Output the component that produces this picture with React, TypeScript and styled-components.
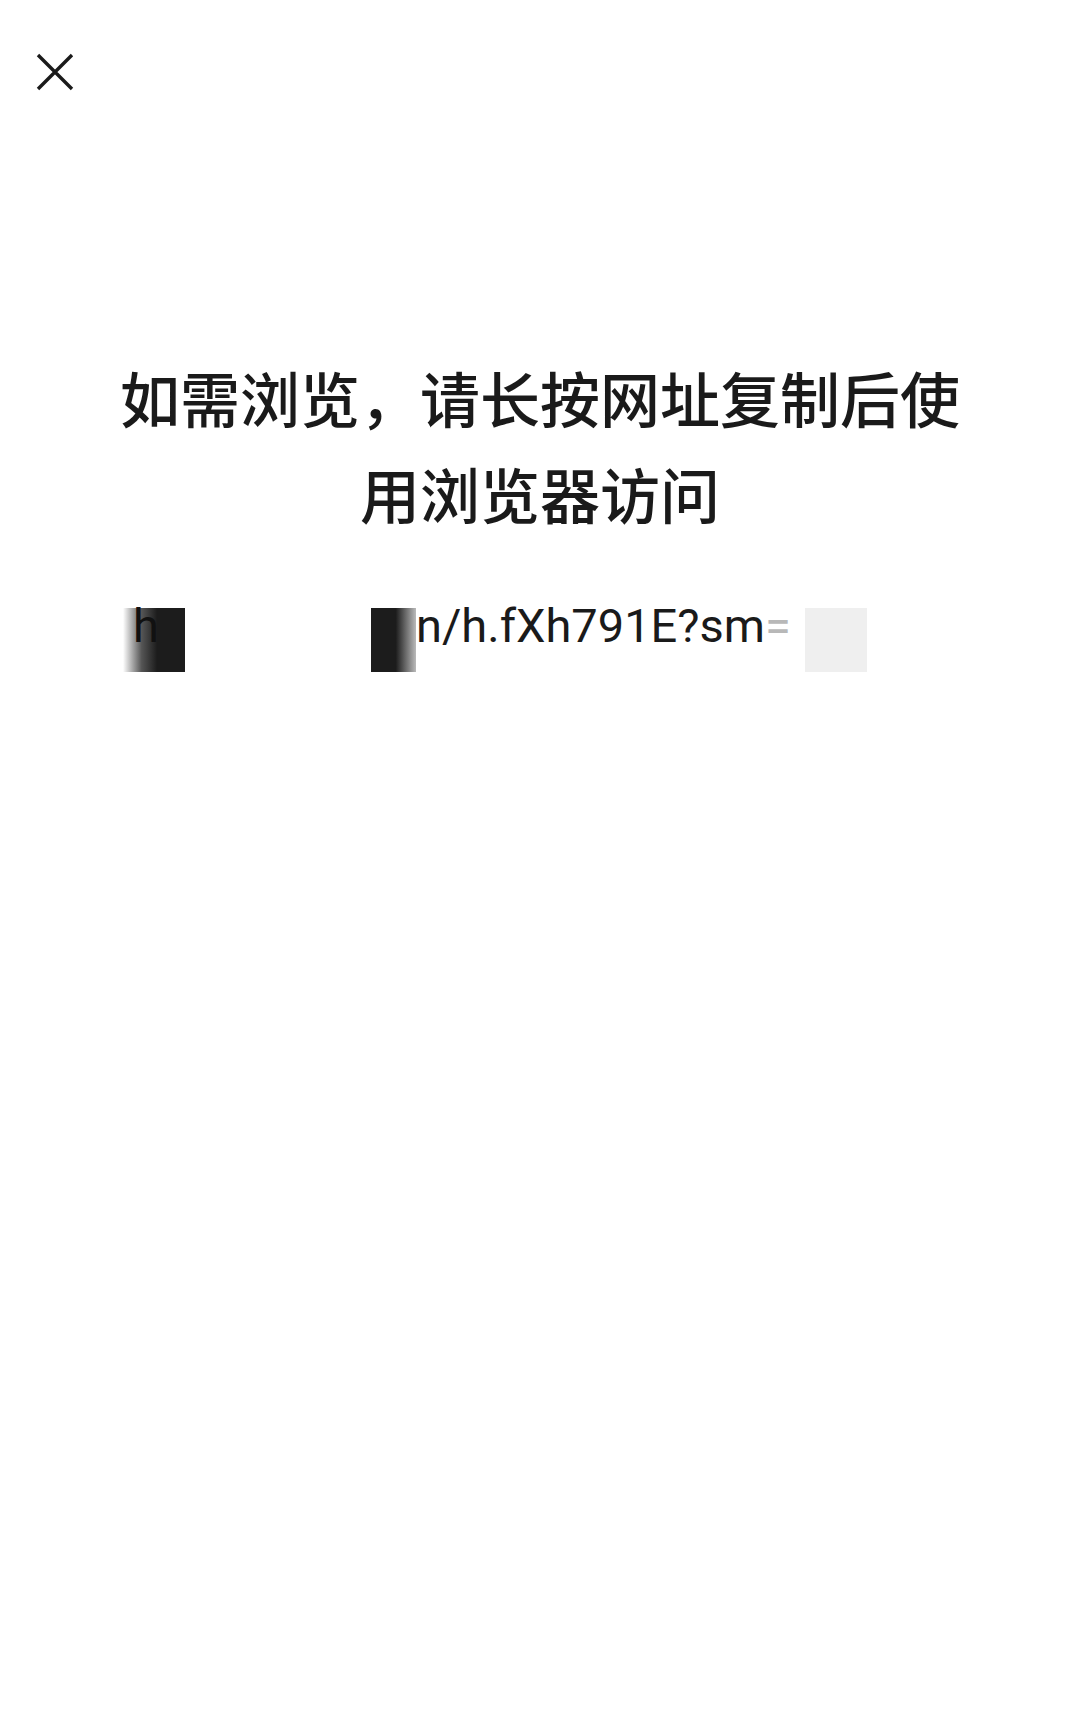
import * as React from "react";
import styled, { createGlobalStyle } from "styled-components";

const GlobalStyle = createGlobalStyle`
  html, body {
    margin: 0;
    padding: 0;
    background: #ffffff;
  }
  body {
    font-family: Roboto, "Noto Sans CJK SC", sans-serif;
    color: #1a1a1a;
  }
`;

const Page = styled.div`
  min-height: 1721px;
  background: #ffffff;
  display: flex;
  flex-direction: column;
`;

const TopBar = styled.div`
  height: 144px;
  display: flex;
  align-items: center;
  padding-left: 35px;
`;

const CloseButton = styled.button`
  width: 40px;
  height: 40px;
  padding: 0;
  border: none;
  background: transparent;
  display: flex;
  align-items: center;
  justify-content: center;
  cursor: pointer;
`;

const Content = styled.div`
  margin-top: 205px;
  padding: 0 100px;
  display: flex;
  flex-direction: column;
`;

const Title = styled.h1`
  margin: 0;
  font-family: "Noto Sans CJK SC", sans-serif;
  font-size: 60px;
  line-height: 96px;
  font-weight: 500;
  text-align: center;
  color: #1a1a1a;
`;

const UrlRow = styled.div`
  margin-top: 67px;
  padding-left: 23px;
  display: flex;
  align-items: flex-start;
  height: 64px;
`;

const Redact = styled.div<{ $w: number; $fade: "left" | "right" }>`
  width: ${(p) => p.$w}px;
  height: 64px;
  flex-shrink: 0;
  background: ${(p) =>
    p.$fade === "left"
      ? "linear-gradient(to right, rgba(28,28,28,0) 0%, rgba(28,28,28,0.75) 30%, #1c1c1c 55%)"
      : "linear-gradient(to right, #1c1c1c 0%, #1c1c1c 55%, rgba(28,28,28,0.3) 100%)"};
  font-family: Roboto, sans-serif;
  font-size: 47px;
  line-height: 36px;
  color: #111111;
  padding-left: ${(p) => (p.$fade === "left" ? 10 : 0)}px;
  box-sizing: border-box;
`;

const Gap = styled.div<{ $w: number }>`
  width: ${(p) => p.$w}px;
  flex-shrink: 0;
`;

const UrlText = styled.span`
  font-family: Roboto, sans-serif;
  font-size: 47px;
  line-height: 36px;
  color: #1a1a1a;
  white-space: nowrap;
`;

const FadedChar = styled.span`
  color: #b8b8b8;
`;

const Mask = styled.div`
  width: 62px;
  height: 64px;
  margin-left: 14px;
  flex-shrink: 0;
  background: #efefef;
`;

const CloseIcon = () => (
  <svg width="38" height="38" viewBox="0 0 38 38" fill="none">
    <path
      d="M2 2 L36 36 M36 2 L2 36"
      stroke="#1a1a1a"
      strokeWidth="3.4"
      strokeLinecap="butt"
    />
  </svg>
);

const App = () => {
  return (
    <Page>
      <GlobalStyle />
      <TopBar>
        <CloseButton aria-label="close">
          <CloseIcon />
        </CloseButton>
      </TopBar>
      <Content>
        <Title>如需浏览，请长按网址复制后使用浏览器访问</Title>
        <UrlRow>
          <Redact $w={62} $fade="left">h</Redact>
          <Gap $w={186} />
          <Redact $w={45} $fade="right" />
          <UrlText>
            n/h.fXh791E?sm<FadedChar>=</FadedChar>
          </UrlText>
          <Mask />
        </UrlRow>
      </Content>
    </Page>
  );
};

export default App;
